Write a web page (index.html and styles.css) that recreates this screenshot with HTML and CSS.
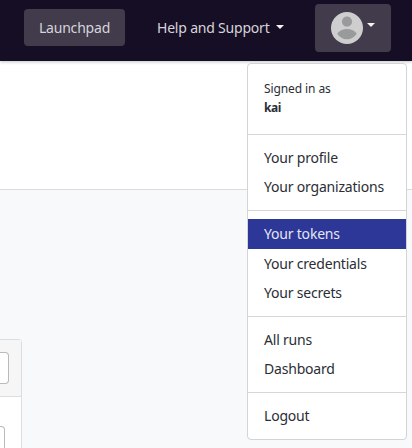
FILE: index.html
```html
<!DOCTYPE html>
<html lang="en">
<head>
<meta charset="utf-8">
<title>Launchpad</title>
<link rel="stylesheet" href="styles.css">
</head>
<body>
<header class="navbar">
  <a class="nav-link active">Launchpad</a>
  <a class="nav-help">Help and Support<i class="caret"></i></a>
  <div class="user">
    <svg class="avatar" viewBox="0 0 32 32"><circle cx="16" cy="16" r="16" fill="#cececf"/><circle cx="16" cy="9.6" r="5.1" fill="#999a9b"/><path d="M6.2 21.8C8 18.6 12 17 16 17s8 1.600 9.800 4.800C23.600 25.300 20 27.300 16 27.300S8.400 25.300 6.200 21.800z" fill="#999a9b"/></svg>
    <i class="caret"></i>
    <div class="menu">
      <div class="signed">Signed in as<br><b>kai</b></div>
      <hr>
      <a class="item">Your profile</a>
      <a class="item">Your organizations</a>
      <hr>
      <a class="item selected">Your tokens</a>
      <a class="item">Your credentials</a>
      <a class="item">Your secrets</a>
      <hr>
      <a class="item">All runs</a>
      <a class="item">Dashboard</a>
      <hr>
      <a class="item">Logout</a>
    </div>
  </div>
</header>
<section class="title-band"></section>
<main>
  <div class="card">
    <div class="card-head"><div class="field"></div></div>
    <div class="card-body"><div class="field small"></div></div>
  </div>
</main>
</body>
</html>
```

FILE: styles.css
```css
* { box-sizing: border-box; }
body {
  margin: 0;
  height: 448px;
  overflow: hidden;
  background: #f7f9fb;
  color: #2b2e35;
  font: 14px/21.6px "Noto Sans", sans-serif;
  letter-spacing: -0.2px;
}
.navbar {
  position: relative;
  display: flex;
  align-items: flex-start;
  height: 61px;
  padding-left: 24px;
  background: #160e25;
  color: #d6d4da;
  box-shadow: 0 1px 3px rgba(22, 14, 37, .25);
}
.nav-link {
  width: 101px;
  height: 37px;
  margin-top: 9px;
  border-radius: 4px;
  line-height: 37px;
  text-align: center;
}
.active { background: #413b4c; }
.nav-help {
  display: flex;
  align-items: center;
  width: 158px;
  height: 37px;
  margin: 9px 0 0 32px;
}
.caret {
  border: 4px solid transparent;
  border-top-color: #f3f2f5;
  border-bottom: 0;
}
.nav-help .caret { margin: -2px 0 0 6px; }
.user {
  position: relative;
  display: flex;
  width: 76px;
  height: 48px;
  margin-top: 4px;
  padding: 8px 0 0 16px;
  border-radius: 4px;
  background: #413b4c;
}
.avatar { width: 32px; height: 32px; }
.user > .caret { margin: 11px 0 0 4px; height: 4px; }
.menu {
  position: absolute;
  top: 59px;
  right: -16px;
  width: 160px;
  height: 377px;
  padding-top: 8px;
  border: 1px solid #d3d4d6;
  border-radius: 4px;
  background: #fff;
  color: #2b2e35;
}
.signed {
  height: 62px;
  padding: 7px 16px 0;
  font-size: 12px;
  line-height: 19px;
  letter-spacing: -0.1px;
}
.signed b { letter-spacing: -0.4px; }
.menu hr {
  height: 1px;
  margin: 0 0 8px;
  border: 0;
  background: #d5d6d8;
}
.item {
  display: block;
  height: 29.6px;
  padding: 3.75px 16px;
  white-space: nowrap;
}
.item + hr { margin-top: 8px; }
.selected { background: #2c3797; color: #e4e6f4; }
.title-band {
  height: 129px;
  border-bottom: 1px solid #dadbde;
  background: #fff;
}
.card {
  width: 22px;
  height: 120px;
  margin-top: 149px;
  border: 1px solid #dcdde0;
  border-left: 0;
  border-radius: 0 4px 0 0;
  background: #fff;
}
.card-head {
  height: 57px;
  padding-top: 12px;
  border-bottom: 1px solid #dcdde0;
  background: #f6f6f6;
}
.field {
  width: 9px;
  height: 32px;
  border: 1px solid #b9babc;
  border-left: 0;
  border-radius: 0 4px 4px 0;
  background: #fff;
}
.card-body { padding-top: 29px; }
.small { width: 5px; }
```
